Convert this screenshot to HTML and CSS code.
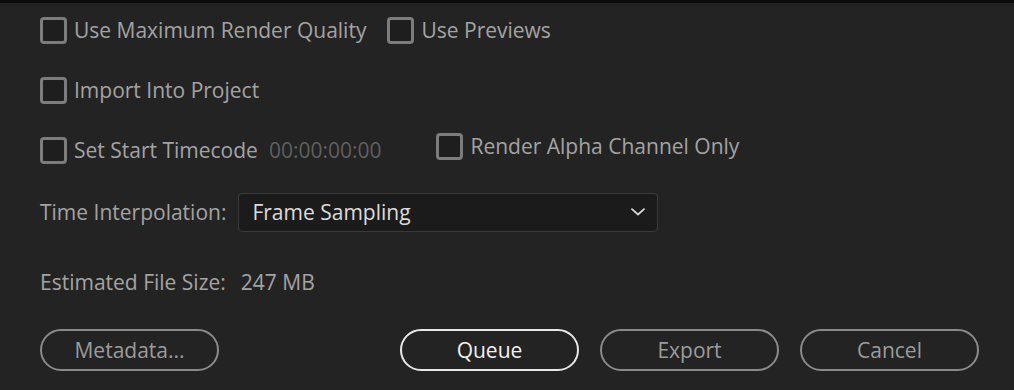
FILE: index.html
```html
<!DOCTYPE html>
<html lang="en">
<head>
    <meta charset="UTF-8">
    <title>Export Settings</title>
    <link rel="stylesheet" href="styles.css">
</head>
<body>
    <div class="top-edge"></div>
    <div id="panel">
        <div class="row row-first">
            <label class="check check-quality"><span class="box"></span>Use Maximum Render Quality</label>
            <label class="check"><span class="box"></span>Use Previews</label>
        </div>
        <div class="row row-import">
            <label class="check"><span class="box"></span>Import Into Project</label>
        </div>
        <div class="row row-timecode">
            <label class="check"><span class="box"></span>Set Start Timecode</label>
            <span class="timecode">00:00:00:00</span>
            <label class="check check-alpha"><span class="box"></span>Render Alpha Channel Only</label>
        </div>
        <div class="row row-interp">
            <span class="label">Time Interpolation:</span>
            <div class="select">
                <span>Frame Sampling</span>
                <svg class="chevron" width="14" height="8" viewBox="0 0 14 8"><path d="M1 1.2 L7 6.5 L13 1.2" fill="none" stroke="#d6d6d6" stroke-width="1.8" stroke-linecap="round" stroke-linejoin="round"/></svg>
            </div>
        </div>
        <div class="row row-size">
            <span class="label">Estimated File Size:</span>
            <span class="size-value">247 MB</span>
        </div>
        <div class="buttons">
            <button class="btn">Metadata...</button>
            <div class="btn-group">
                <button class="btn btn-primary">Queue</button>
                <button class="btn">Export</button>
                <button class="btn">Cancel</button>
            </div>
        </div>
    </div>
</body>
</html>
```

FILE: styles.css
```css
body {
    margin: 0;
    background-color: #232323;
    font-family: 'Open Sans', 'Noto Sans', sans-serif;
    color: #a3a3a3;
    font-size: 21px;
    overflow: hidden;
}
.top-edge {
    height: 3px;
    background-color: #0a0a0a;
}
#panel {
    padding: 0 40px;
}
.row {
    display: flex;
    align-items: center;
}
.row-first {
    height: 54px;
}
.row-import {
    height: 66px;
}
.row-timecode {
    height: 54px;
}
.row-interp {
    height: 70px;
}
.row-size {
    height: 70px;
}
.check {
    display: flex;
    align-items: center;
    gap: 7px;
    white-space: nowrap;
}
.check-quality {
    margin-right: 21px;
}
.check-alpha {
    margin-bottom: 8px;
}
.box {
    width: 21px;
    height: 21px;
    border: 3px solid #7c7c7c;
    border-radius: 4px;
    background-color: #1e1e1e;
}
.timecode {
    color: #5f5f5f;
    margin-left: 11px;
    margin-right: 55px;
}
.label {
    white-space: nowrap;
}
.select {
    margin-left: 12px;
    width: 420px;
    height: 39px;
    box-sizing: border-box;
    border: 1px solid #3a3a3a;
    border-radius: 4px;
    background-color: #1b1b1b;
    display: flex;
    align-items: center;
    justify-content: space-between;
    padding: 0 12px 0 13px;
    color: #dcdcdc;
}
.size-value {
    margin-left: 15px;
}
.buttons {
    display: flex;
    justify-content: space-between;
    width: 939px;
    margin-top: 12px;
}
.btn-group {
    display: flex;
    gap: 21px;
}
.btn {
    width: 179px;
    height: 42px;
    border: 2px solid #8a8a8a;
    border-radius: 21px;
    background-color: transparent;
    color: #9c9c9c;
    font-family: 'Open Sans', 'Noto Sans', sans-serif;
    font-size: 21px;
    padding: 0;
}
.btn-primary {
    border-color: #e8e8e8;
    color: #f2f2f2;
}
```
